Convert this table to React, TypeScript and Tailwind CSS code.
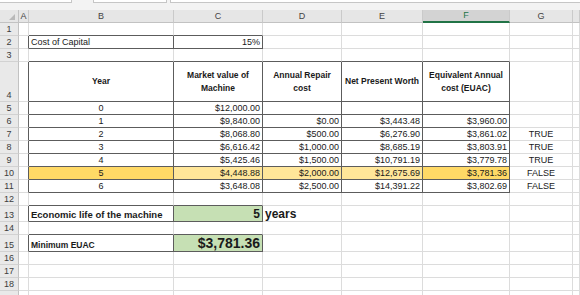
import React from "react";

type CP = {
  r?: boolean;
  b?: boolean;
  bg?: string;
  cls?: string;
  children?: React.ReactNode;
};

function Cell({ r, b, bg = "bg-white", cls = "", children }: CP) {
  return (
    <div
      className={`border-r border-b ${r ? "border-r-[#5c5c5c]" : "border-r-[#dcdcdc]"} ${
        b ? "border-b-[#5c5c5c]" : "border-b-[#dcdcdc]"
      } ${bg} relative whitespace-nowrap text-[#1a1a1a] ${cls}`}
    >
      {children}
    </div>
  );
}

function RH({ n }: { n: string }) {
  return (
    <div className="bg-[#e9e9e9] border-r border-b border-r-[#c2c2c2] border-b-[#d2d2d2] flex items-end justify-center pb-[1px] text-[9px] leading-none text-[#3c3c3c]">
      {n}
    </div>
  );
}

const num = "flex items-end justify-end pr-[2px] pb-[1px] text-[9px] leading-none";
const ctr = "flex items-end justify-center pb-[1px] text-[9px] leading-none";
const hdr = "flex items-center justify-center text-center text-[8.5px] font-bold leading-[13px]";

const rows = [
  { n: "5", y: "0", c: "$12,000.00", d: "", e: "", f: "", g: "" },
  { n: "6", y: "1", c: "$9,840.00", d: "$0.00", e: "$3,443.48", f: "$3,960.00", g: "" },
  { n: "7", y: "2", c: "$8,068.80", d: "$500.00", e: "$6,276.90", f: "$3,861.02", g: "TRUE" },
  { n: "8", y: "3", c: "$6,616.42", d: "$1,000.00", e: "$8,685.19", f: "$3,803.91", g: "TRUE" },
  { n: "9", y: "4", c: "$5,425.46", d: "$1,500.00", e: "$10,791.19", f: "$3,779.78", g: "TRUE" },
  { n: "10", y: "5", c: "$4,448.88", d: "$2,000.00", e: "$12,675.69", f: "$3,781.36", g: "FALSE" },
  { n: "11", y: "6", c: "$3,648.08", d: "$2,500.00", e: "$14,391.22", f: "$3,802.69", g: "FALSE" },
];

function Blank({ n, b }: { n: string; b?: boolean }) {
  return (
    <>
      <RH n={n} />
      <Cell />
      <Cell b={b} />
      <Cell b={b} />
      <Cell />
      <Cell />
      <Cell />
      <Cell />
      <Cell />
    </>
  );
}

export default function App() {
  return (
    <div
      className="w-[580px] h-[295px] overflow-hidden bg-white"
      style={{ fontFamily: '"Liberation Sans", Arial, sans-serif' }}
    >
      {/* top strip (name box / formula bar edges) */}
      <div className="h-[10px] bg-[#f3f3f3] flex items-start">
        <div className="w-[72px] h-[3px] bg-white border-b border-r border-[#c6c6c6]" />
        <div className="w-[21px]" />
        <div className="w-[74px] h-[3px] bg-white border-b border-l border-r border-[#c6c6c6]" />
        <div className="w-[3px]" />
        <div className="flex-1 h-[3px] bg-white border-b border-l border-[#c6c6c6]" />
      </div>

      <div className="grid grid-cols-[19px_10px_145px_89px_79px_81px_87px_63px_1fr] grid-rows-[13px_13px_13px_13px_40px_13px_13px_13px_13px_13px_13px_13px_13px_16px_13px_17px_13px_13px_13px_13px]">
        {/* column headers */}
        <div className="bg-[#e6e6e6] border-r border-b border-r-[#c2c2c2] border-b-[#c2c2c2] relative">
          <div className="absolute right-[3px] bottom-[2px] w-0 h-0 border-l-[6px] border-l-transparent border-b-[6px] border-b-[#b9b9b9]" />
        </div>
        {["A", "B", "C", "D", "E"].map((l) => (
          <div
            key={l}
            className="bg-[#e6e6e6] border-r border-b border-r-[#cacaca] border-b-[#c2c2c2] flex items-center justify-center text-[9px] leading-none text-[#444]"
          >
            {l}
          </div>
        ))}
        <div className="bg-[#d3d3d3] border-r border-b-2 border-r-[#cacaca] border-b-[#217346] flex items-center justify-center text-[9px] leading-none text-[#217346]">
          F
        </div>
        {["G", ""].map((l, i) => (
          <div
            key={i}
            className="bg-[#e6e6e6] border-r border-b border-r-[#cacaca] border-b-[#c2c2c2] flex items-center justify-center text-[9px] leading-none text-[#444]"
          >
            {l}
          </div>
        ))}

        {/* row 1 */}
        <Blank n="1" b />

        {/* row 2 */}
        <RH n="2" />
        <Cell r />
        <Cell r b cls="flex items-end pl-[2px] pb-[1px] text-[9px] leading-none">
          Cost of Capital
        </Cell>
        <Cell r b cls={num}>
          15%
        </Cell>
        <Cell />
        <Cell />
        <Cell />
        <Cell />
        <Cell />

        {/* row 3 */}
        <RH n="3" />
        <Cell />
        <Cell b />
        <Cell b />
        <Cell b />
        <Cell b />
        <Cell b />
        <Cell />
        <Cell />

        {/* row 4 */}
        <RH n="4" />
        <Cell r />
        <Cell r b cls={hdr}>
          Year
        </Cell>
        <Cell r b cls={hdr}>
          Market value of
          <br />
          Machine
        </Cell>
        <Cell r b cls={hdr}>
          Annual Repair
          <br />
          cost
        </Cell>
        <Cell r b cls={hdr}>
          Net Present Worth
        </Cell>
        <Cell r b cls={hdr}>
          Equivalent Annual
          <br />
          cost (EUAC)
        </Cell>
        <Cell />
        <Cell />

        {rows.map((row) => {
          const hi = row.n === "10";
          return (
            <React.Fragment key={row.n}>
              <RH n={row.n} />
              <Cell r />
              <Cell r b bg={hi ? "bg-[#ffd966]" : "bg-white"} cls={ctr}>
                {row.y}
              </Cell>
              <Cell r b bg={hi ? "bg-[#ffe699]" : "bg-white"} cls={num}>
                {row.c}
              </Cell>
              <Cell r b bg={hi ? "bg-[#ffe699]" : "bg-white"} cls={num}>
                {row.d}
              </Cell>
              <Cell r b bg={hi ? "bg-[#ffe699]" : "bg-white"} cls={num}>
                {row.e}
              </Cell>
              <Cell r b bg={hi ? "bg-[#ffd966]" : "bg-white"} cls={num}>
                {row.f}
              </Cell>
              <Cell cls={ctr}>{row.g}</Cell>
              <Cell />
            </React.Fragment>
          );
        })}

        {/* row 12 */}
        <Blank n="12" b />

        {/* row 13 */}
        <RH n="13" />
        <Cell r />
        <Cell r b cls="flex items-end pl-[2px] pb-[2px] text-[9.5px] font-bold leading-none">
          Economic life of the machine
        </Cell>
        <Cell
          r
          b
          bg="bg-[#c6e0b4]"
          cls="flex items-end justify-end pr-[2px] pb-[1px] text-[12px] font-bold leading-none"
        >
          5
        </Cell>
        <Cell cls="flex items-end pl-[2px] pb-[1px] text-[12px] font-bold leading-none">years</Cell>
        <Cell />
        <Cell />
        <Cell />
        <Cell />

        {/* row 14 */}
        <Blank n="14" b />

        {/* row 15 */}
        <RH n="15" />
        <Cell r />
        <Cell r b cls="flex items-end pl-[2px] pb-[2px] text-[8.5px] font-bold leading-none">
          Minimum EUAC
        </Cell>
        <Cell
          r
          b
          bg="bg-[#c6e0b4]"
          cls="flex items-end justify-end pr-[2px] pb-[1px] text-[14px] font-bold leading-none"
        >
          $3,781.36
        </Cell>
        <Cell />
        <Cell />
        <Cell />
        <Cell />
        <Cell />

        <Blank n="16" />
        <Blank n="17" />
        <Blank n="18" />
        <Blank n="" />
      </div>
    </div>
  );
}
